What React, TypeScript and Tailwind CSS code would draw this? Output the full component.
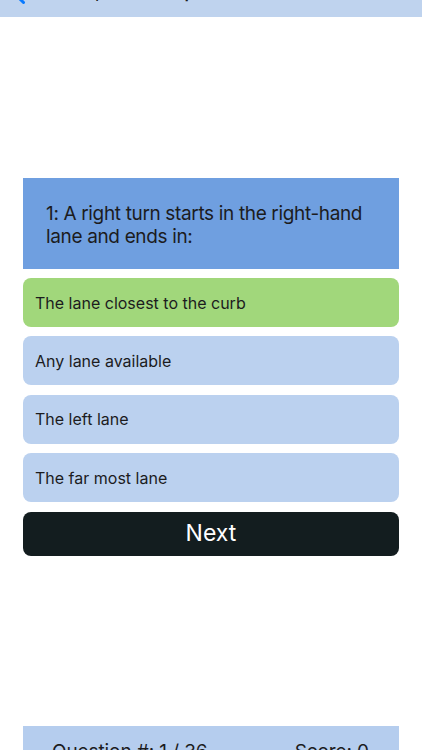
import type { ReactNode } from "react";

const answers = [
  { id: 1, text: "The lane closest to the curb", correct: true },
  { id: 2, text: "Any lane available", correct: false },
  { id: 3, text: "The left lane", correct: false },
  { id: 4, text: "The far most lane", correct: false },
];

export default function App() {
  return (
    <div className="flex h-[750px] flex-col overflow-hidden bg-white font-['Inter','Noto_Sans',sans-serif] text-[#1c1c1e]">
      <NavBar />

      <main className="mt-[161px] flex flex-col px-[23px]">
        <div className="bg-[#6f9fe0] pb-[21px] pl-[23px] pr-[20px] pt-[24px] text-[19px] leading-[23px] tracking-[-0.35px]">
          1: A right turn starts in the right-hand lane and ends in:
        </div>

        <div className="mt-[9px] flex flex-col gap-[9.4px]">
          {answers.map((a) => (
            <Answer key={a.id} correct={a.correct}>
              {a.text}
            </Answer>
          ))}
        </div>

        <button className="mt-[9.4px] flex h-[44px] items-center justify-center rounded-[8px] bg-[#131d1f] text-[23px] text-white">
          Next
        </button>
      </main>

      <footer className="mx-[23px] mt-[170px] flex h-[60px] shrink-0 justify-between bg-[#b5cdee] pl-[29px] pr-[30px] pt-[12px] text-[19px] tracking-[-0.1px]">
        <span>Question #: 1 / 36</span>
        <span>Score: 0</span>
      </footer>
    </div>
  );
}

function NavBar() {
  return (
    <header className="h-[17px] shrink-0 overflow-hidden bg-[#bfd3ee]">
      <div className="-mt-[29px] flex h-[44px] items-center pl-[13px]">
        <svg width="12" height="21" viewBox="0 0 12 21" fill="none" aria-hidden="true">
          <path d="M10.5 1.5 1.5 10.5l9 9" stroke="#0a7aff" strokeWidth="3" strokeLinecap="round" strokeLinejoin="round" />
        </svg>
        <span className="ml-[4px] text-[17px] font-semibold tracking-[-0.3px]">Lessons, Traffic Map</span>
      </div>
    </header>
  );
}

function Answer({ correct, children }: { correct: boolean; children: ReactNode }) {
  return (
    <button
      className={
        correct
          ? "flex h-[49px] items-center rounded-[8px] bg-[#a1d77b] px-[12px] text-left text-[16px]"
          : "flex h-[49px] items-center rounded-[8px] bg-[#bbd1ef] px-[12px] text-left text-[16px]"
      }
    >
      {children}
    </button>
  );
}
